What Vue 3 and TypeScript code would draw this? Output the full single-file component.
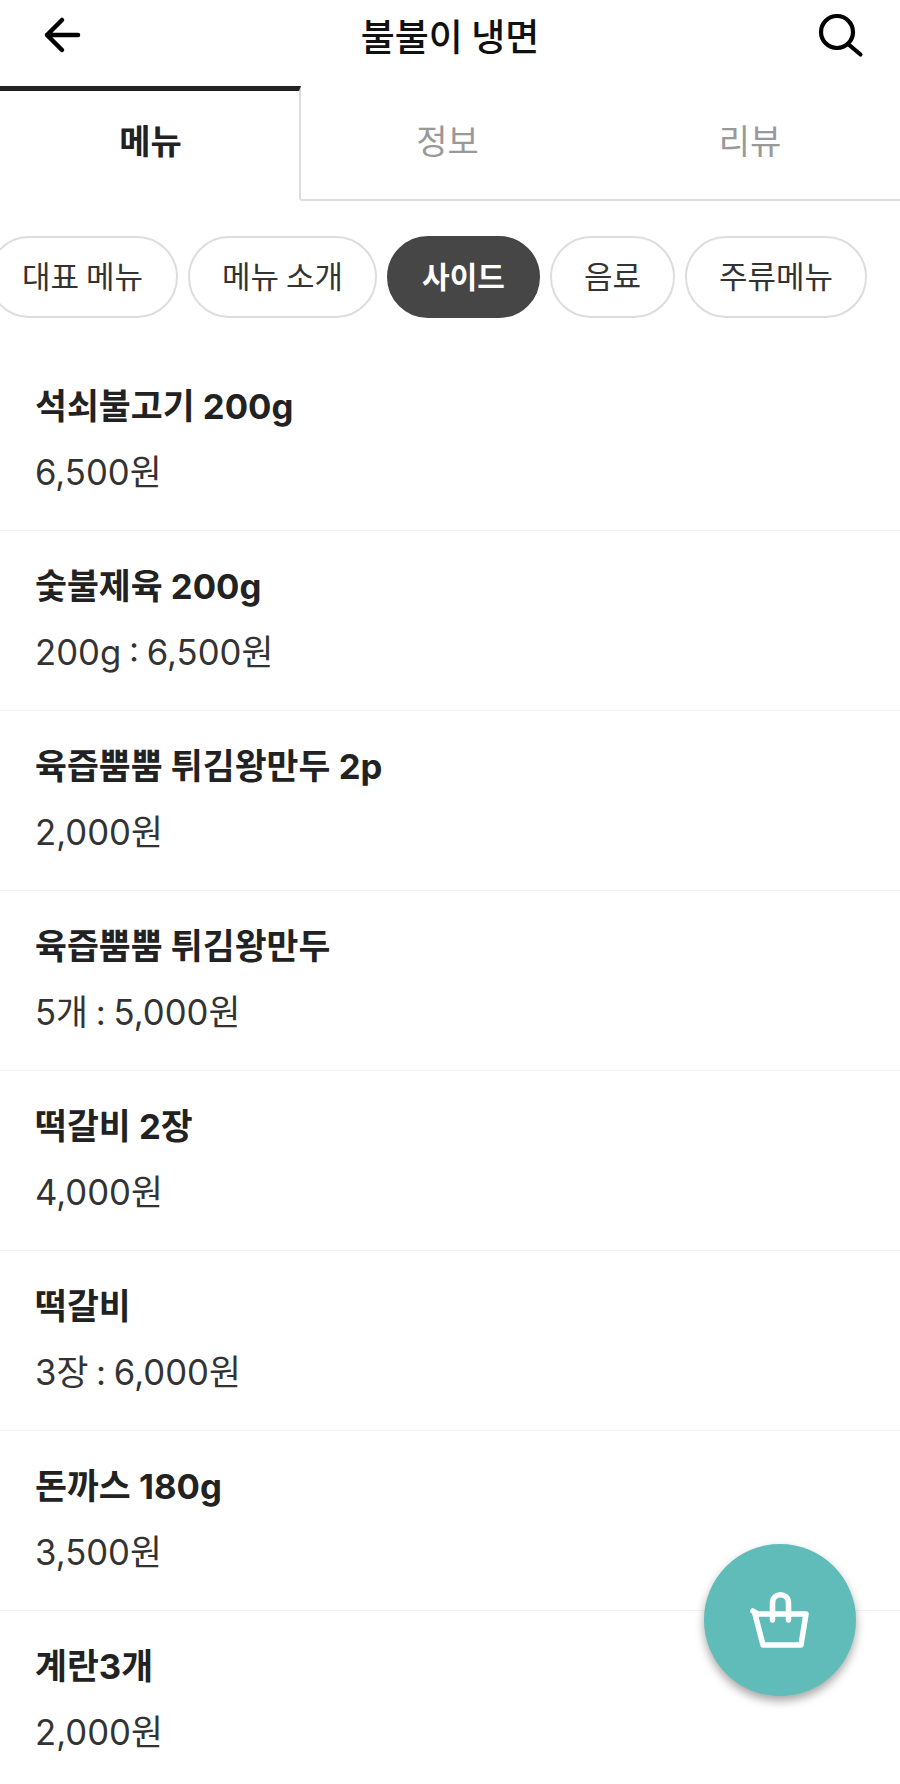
<template>
  <div class="page">
    <header class="top-bar">
      <button class="icon-btn" aria-label="뒤로">
        <svg width="44" height="44" viewBox="0 0 44 44">
          <path d="M38 22H7M22 7 7 22l15 15" fill="none" stroke="#000" stroke-width="4.5" stroke-linecap="round" stroke-linejoin="round" />
        </svg>
      </button>
      <h1 class="store-name">불불이 냉면</h1>
      <button class="icon-btn" aria-label="검색">
        <svg width="48" height="48" viewBox="0 0 48 48">
          <circle cx="21" cy="21" r="16" fill="none" stroke="#000" stroke-width="4.2" />
          <path d="M32 33 44.5 43.5" fill="none" stroke="#000" stroke-width="4.2" stroke-linecap="round" />
        </svg>
      </button>
    </header>

    <nav class="tabs">
      <div v-for="(tab, i) in tabs" :key="tab" class="tab" :class="{ active: i === 0 }">{{ tab }}</div>
    </nav>

    <div class="chips">
      <span v-for="chip in chips" :key="chip" class="chip" :class="{ selected: chip === selected }">{{ chip }}</span>
    </div>

    <ul class="menu-list">
      <li v-for="item in items" :key="item.name" class="menu-item">
        <div class="menu-name">{{ item.name }}</div>
        <div class="menu-price">{{ item.price }}</div>
      </li>
    </ul>

    <button class="cart-fab" aria-label="장바구니">
      <svg width="60" height="60" viewBox="0 0 60 60">
        <path d="M3 21 8 24H56L51 55H13L5 24" fill="none" stroke="#fff" stroke-width="5.5" stroke-linecap="round" stroke-linejoin="round" />
        <path d="M22.5 30V13C22.5 2 38.5 2 38.5 13V30" fill="none" stroke="#fff" stroke-width="5.5" stroke-linecap="round" />
      </svg>
    </button>
  </div>
</template>

<script setup lang="ts">
interface MenuItem {
  name: string
  price: string
}

const tabs = ['메뉴', '정보', '리뷰']
const chips = ['대표 메뉴', '메뉴 소개', '사이드', '음료', '주류메뉴']
const selected = '사이드'

const items: MenuItem[] = [
  { name: '석쇠불고기 200g', price: '6,500원' },
  { name: '숯불제육 200g', price: '200g : 6,500원' },
  { name: '육즙뿜뿜 튀김왕만두 2p', price: '2,000원' },
  { name: '육즙뿜뿜 튀김왕만두', price: '5개 : 5,000원' },
  { name: '떡갈비 2장', price: '4,000원' },
  { name: '떡갈비', price: '3장 : 6,000원' },
  { name: '돈까스 180g', price: '3,500원' },
  { name: '계란3개', price: '2,000원' }
]
</script>

<style>
html,
body {
  margin: 0;
  background: #fff;
}
</style>

<style scoped>
.page {
  position: relative;
  width: 900px;
  height: 1784px;
  overflow: hidden;
  background: #fff;
  color: #222;
  font-family: "Noto Sans CJK KR", "Noto Sans", sans-serif;
}

.top-bar {
  display: flex;
  align-items: center;
  justify-content: space-between;
  height: 70px;
  padding: 0 36px 0 40px;
}

.icon-btn {
  display: flex;
  padding: 0;
  border: 0;
  background: none;
}

.store-name {
  margin: 0;
  font-size: 37px;
  font-weight: 500;
  color: #111;
}

.tabs {
  display: flex;
  margin-top: 16px;
}

.tab {
  flex: 1;
  height: 108px;
  line-height: 98px;
  text-align: center;
  font-size: 34px;
  color: #999;
  border-bottom: 2px solid #ddd;
  border-top: 5px solid transparent;
}

.tab.active {
  flex: 0 0 297px;
  padding-left: 2px;
  font-weight: 700;
  color: #222;
  border-top-color: #222;
  border-bottom: 2px solid #fff;
  border-right: 2px solid #ddd;
}

.tab:nth-child(2) {
  flex: 0 0 293px;
}

.tab:nth-child(3) {
  padding-left: 6px;
}

.chips {
  display: flex;
  gap: 10px;
  margin: 35px 0 0 -12px;
}

.chip {
  flex: none;
  height: 78px;
  line-height: 74px;
  padding: 0 32px;
  border: 2px solid #ddd;
  border-radius: 41px;
  font-size: 31px;
  color: #333;
  white-space: nowrap;
}

.chip:first-child {
  padding-right: 33px;
}

.chip.selected {
  padding: 0 33px;
  background: #464646;
  border-color: #464646;
  color: #fff;
  font-size: 30px;
  font-weight: 700;
}

.menu-list {
  margin: 33px 0 0;
  padding: 0;
  list-style: none;
}

.menu-item {
  height: 179px;
  padding: 0 35px;
  border-bottom: 1px solid #f0f0f0;
}

.menu-name {
  padding-top: 30px;
  font-family: Inter, "Noto Sans CJK KR", sans-serif;
  font-size: 34.7px;
  line-height: 50px;
  font-weight: 700;
  color: #222;
}

.menu-price {
  margin-top: 16px;
  font-family: Inter, "Noto Sans CJK KR", sans-serif;
  font-size: 34.7px;
  line-height: 50px;
  word-spacing: -2px;
  color: #333;
}

.cart-fab {
  position: absolute;
  left: 704px;
  top: 1544px;
  display: flex;
  align-items: center;
  justify-content: center;
  width: 152px;
  height: 152px;
  padding: 0;
  border: 0;
  border-radius: 50%;
  background: #5fbcb8;
  box-shadow: 0 5px 10px rgba(0, 0, 0, 0.35);
}
</style>
